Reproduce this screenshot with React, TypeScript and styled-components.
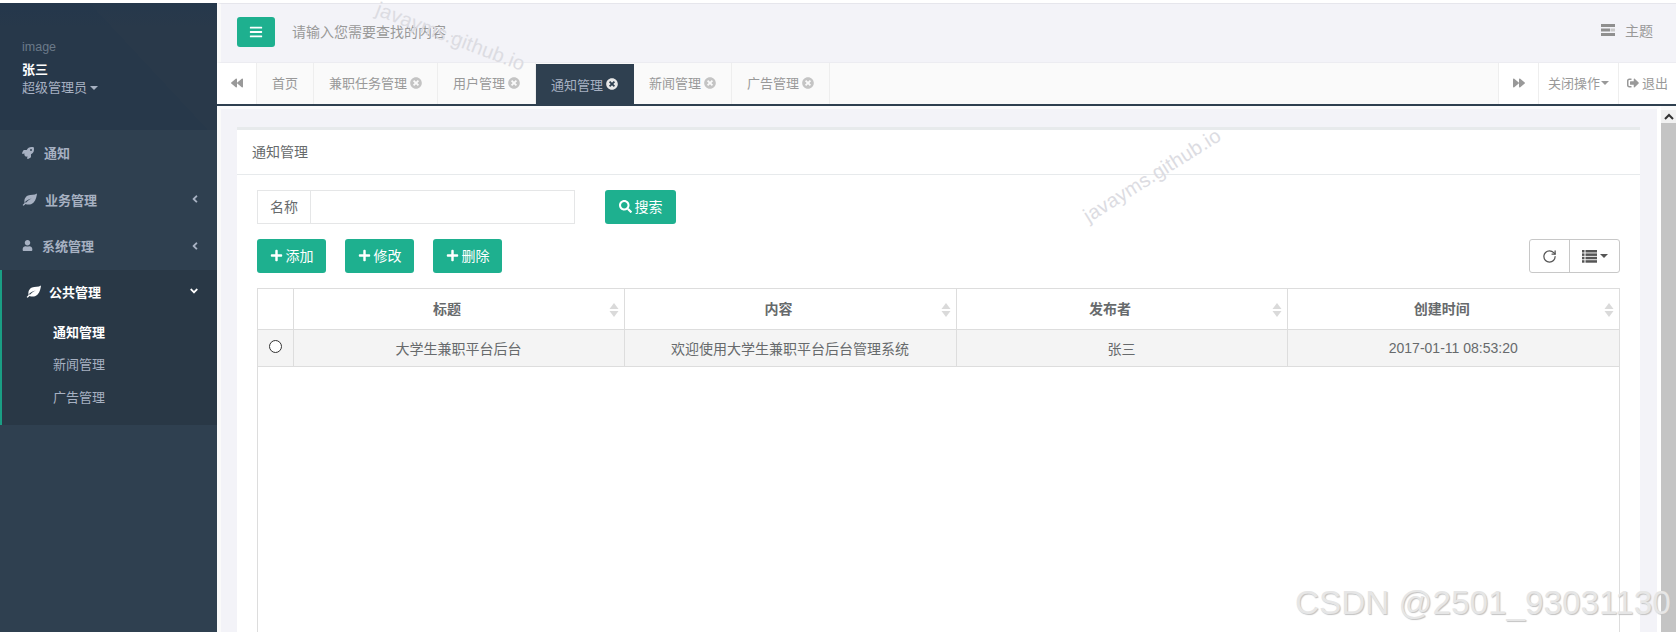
import React from "react";
import styled, { createGlobalStyle } from "styled-components";
import {
  FaBars, FaRocket, FaUser, FaAngleLeft, FaAngleDown, FaBackward, FaForward,
  FaTimesCircle, FaSearch, FaPlus, FaSignOutAlt,
} from "react-icons/fa";
import { RotateCw } from "lucide-react";

const GlobalStyle = createGlobalStyle`
  html, body { margin: 0; padding: 0; height: 100%; overflow: hidden; background: #fff; }
  body { font-family: "Liberation Sans", "Noto Sans CJK SC", sans-serif; font-size: 13px; color: #676a6c; }
  * { box-sizing: border-box; }
`;

const Page = styled.div`
  position: relative;
  display: flex;
  width: 100vw;
  height: 100vh;
  padding-top: 3px;
  overflow: hidden;
`;

const Sidebar = styled.aside`
  flex: 0 0 217px;
  display: flex;
  flex-direction: column;
  background: #2f4050;
  color: #a7b1c2;
`;

const Profile = styled.div`
  height: 127px;
  padding: 36px 0 0 22px;
  display: flex;
  flex-direction: column;
  background:
    linear-gradient(to bottom, rgba(28, 52, 80, 0.25), rgba(28, 52, 80, 0) 24px),
    linear-gradient(47deg, #27384a 0, #27384a 62%, #29394a 62%);
`;

const AvatarAlt = styled.span`
  font-size: 12.5px;
  line-height: 16px;
  color: #6b7a89;
`;

const UserName = styled.strong`
  margin-top: 6px;
  font-size: 13px;
  line-height: 18px;
  color: #fff;
`;

const UserRole = styled.span`
  font-size: 13px;
  line-height: 18px;
  color: #a7b1c2;
  display: flex;
  align-items: center;
`;

const Caret = styled.i<{ $gap?: number }>`
  display: inline-block;
  margin-left: ${(p) => p.$gap ?? 3}px;
  width: 0;
  height: 0;
  border-left: 4px solid transparent;
  border-right: 4px solid transparent;
  border-top: 4px solid currentColor;
`;

const NavItem = styled.div<{ $height: number; $gap: number }>`
  height: ${(p) => p.$height}px;
  padding: 0 16px 2px 22px;
  display: flex;
  align-items: center;
  gap: ${(p) => p.$gap}px;
  font-size: 13px;
  font-weight: 700;
  color: #a7b1c2;
  & > span { flex: 1; }
`;

const ActiveGroup = styled.div`
  height: 155px;
  background: #293846;
  border-left: 2px solid #1a9e84;
`;

const ActiveHeader = styled(NavItem)`
  padding: 0 17px 2px 24px;
  color: #fff;
`;

const SubList = styled.ul`
  margin: 2px 0 0;
  padding: 0;
  list-style: none;
`;

const SubItem = styled.li<{ $active?: boolean }>`
  height: 32.5px;
  padding: 0 0 2px 51px;
  display: flex;
  align-items: center;
  font-size: 13px;
  font-weight: ${(p) => (p.$active ? 700 : 400)};
  color: ${(p) => (p.$active ? "#fff" : "#a7b1c2")};
`;

const Main = styled.main`
  flex: 1;
  min-width: 0;
  display: flex;
  flex-direction: column;
`;

const TopBar = styled.header`
  height: 60px;
  padding: 13px 23px 0 16px;
  display: flex;
  align-items: flex-start;
  background: #f3f3f8;
  border-top: 1px solid #e6e6ec;
  border-left: 4px solid #fafafa;
  border-bottom: 1px solid #ececf1;
`;

const MenuButton = styled.button`
  width: 38px;
  height: 30px;
  padding: 0;
  border: 0;
  border-radius: 3px;
  background: #1eb08f;
  color: #fff;
  font-size: 14px;
  display: flex;
  align-items: center;
  justify-content: center;
`;

const SearchHint = styled.div`
  flex: 1;
  margin-left: 17px;
  font-size: 14px;
  line-height: 30px;
  color: #999;
`;

const FadedDots = styled.span`
  color: #d6d6dc;
`;

const ThemeLink = styled.div`
  display: flex;
  align-items: center;
  gap: 10px;
  height: 26px;
  font-size: 14px;
  color: #999;
`;

const TabBar = styled.nav`
  height: 43px;
  display: flex;
  background: #fafafa;
  border-bottom: 2px solid #2f4050;
`;

const TabArrow = styled.div<{ $width: number }>`
  flex: 0 0 ${(p) => p.$width}px;
  padding-bottom: 2px;
  display: flex;
  align-items: center;
  justify-content: center;
  gap: 3px;
  background: #fff;
  color: #999;
  font-size: 13px;
  border-left: 1px solid #eee;
  &:first-child { border-left: 0; border-right: 1px solid #eee; }
`;

const TabList = styled.div`
  flex: 1;
  display: flex;
`;

const Tab = styled.div<{ $active?: boolean }>`
  display: flex;
  align-items: center;
  gap: 3px;
  padding: 0 15px 2px;
  font-size: 13px;
  margin-top: ${(p) => (p.$active ? "1px" : "0")};
  margin-bottom: ${(p) => (p.$active ? "-2px" : "0")};
  color: ${(p) => (p.$active ? "#a7b1c2" : "#999")};
  background: ${(p) => (p.$active ? "#2f4050" : "transparent")};
  border-right: 1px solid ${(p) => (p.$active ? "#2f4050" : "#eee")};
  svg { color: ${(p) => (p.$active ? "#e8e8e8" : "#c4c4c4")}; font-size: 12px; }
`;

const Body = styled.div`
  flex: 1;
  min-height: 0;
  display: flex;
`;

const Content = styled.div`
  flex: 1;
  min-width: 0;
  display: flex;
  flex-direction: column;
  padding: 18px 17px 0 16px;
  background: #f3f3f8;
  border-left: 4px solid #fafafa;
  border-right: 4px solid #fff;
  border-top: 3px solid #fbfbfc;
`;

const Card = styled.section`
  flex: 1;
  min-height: 0;
  display: flex;
  flex-direction: column;
  background: #fff;
  border-top: 3px solid #e7eaec;
`;

const CardTitle = styled.h5`
  margin: 0;
  height: 45px;
  padding-left: 15px;
  font-size: 14px;
  font-weight: 400;
  line-height: 44px;
  color: #676a6c;
  border-bottom: 1px solid #e7eaec;
`;

const CardBody = styled.div`
  flex: 1;
  min-height: 0;
  display: flex;
  flex-direction: column;
  padding: 15px 20px 0;
`;

const FilterRow = styled.div`
  display: flex;
  gap: 30px;
  height: 34px;
  margin-bottom: 15px;
`;

const InputGroup = styled.div`
  width: 318px;
  display: flex;
  border: 1px solid #e5e6e7;
`;

const InputLabel = styled.span`
  flex: 0 0 53px;
  padding-bottom: 2px;
  display: flex;
  align-items: center;
  justify-content: center;
  font-size: 14px;
  color: #676a6c;
  border-right: 1px solid #e5e6e7;
`;

const TextInput = styled.input`
  flex: 1;
  min-width: 0;
  border: 0;
  outline: 0;
  background: #fff;
`;

const PrimaryButton = styled.button<{ $width?: number }>`
  width: ${(p) => p.$width || 69}px;
  height: 34px;
  padding: 0 0 2px;
  display: flex;
  align-items: center;
  justify-content: center;
  gap: 3px;
  border: 0;
  border-radius: 3px;
  background: #1eb08f;
  color: #fff;
  font: inherit;
  font-size: 14px;
`;

const Toolbar = styled.div`
  display: flex;
  align-items: flex-start;
  gap: 19px;
  height: 34px;
  margin-bottom: 15px;
`;

const ToolGroup = styled.div`
  margin-left: auto;
  width: 91px;
  height: 34px;
  display: flex;
  border: 1px solid #c8c8c8;
  border-radius: 3px;
  color: #555;
`;

const ToolButton = styled.div<{ $width: number }>`
  flex: 0 0 ${(p) => p.$width}px;
  display: flex;
  align-items: center;
  justify-content: center;
  gap: 3px;
  & + & { border-left: 1px solid #c8c8c8; }
`;

const TableFrame = styled.div`
  flex: 1;
  min-height: 0;
  border: 1px solid #ddd;
  border-bottom: 0;
`;

const DataTable = styled.table`
  width: 100%;
  table-layout: fixed;
  border-collapse: collapse;
  font-size: 14px;
  color: #676a6c;
`;

const HeadCell = styled.th`
  position: relative;
  height: 40px;
  padding: 0 23px 2px 0;
  font-weight: 700;
  text-align: center;
  border-right: 1px solid #ddd;
  border-bottom: 1px solid #ddd;
  &:last-child { border-right: 0; }
`;

const SortMark = styled.svg`
  position: absolute;
  right: 5px;
  top: 14px;
`;

const Row = styled.tr`
  background: #f4f4f4;
`;

const Cell = styled.td`
  height: 37px;
  padding: 0;
  text-align: center;
  font-weight: 400;
  border-right: 1px solid #ddd;
  border-bottom: 1px solid #ddd;
  &:last-child { border-right: 0; }
`;

const RadioInput = styled.input`
  display: block;
  appearance: none;
  margin: 0 0 2px 11px;
  width: 13px;
  height: 13px;
  border: 1.3px solid #333;
  border-radius: 50%;
  background: #fff;
`;

const ScrollTrack = styled.div`
  flex: 0 0 15px;
  display: flex;
  flex-direction: column;
  background: #f1f1f1;
  border-top: 4px solid #fafafa;
`;

const ScrollUp = styled.div`
  flex: 0 0 13px;
  display: flex;
  align-items: center;
  justify-content: center;
`;

const ScrollThumb = styled.div`
  flex: 1;
  background: #c4c4c4;
`;

const SoftMark = styled.span<{ $left: number; $top: number; $angle: number }>`
  position: absolute;
  left: ${(p) => p.$left}px;
  top: ${(p) => p.$top}px;
  font-size: 20px;
  line-height: 24px;
  letter-spacing: 0.2px;
  color: #dcdce2;
  white-space: nowrap;
  transform: rotate(${(p) => p.$angle}deg);
  transform-origin: left center;
  pointer-events: none;
`;

const CsdnMark = styled.span`
  position: absolute;
  left: 1295px;
  top: 586px;
  font-size: 33.3px;
  line-height: 33px;
  color: #e6e6e6;
  text-shadow: 1px 1px 1px #c2c2c2;
  white-space: nowrap;
  pointer-events: none;
`;

const SortIcon = () => (
  <SortMark width="10" height="14" viewBox="0 0 10 14" fill="#dadada">
    <path d="M5 0 9.5 6H.5z" />
    <path d="M5 14 .5 8h9z" />
  </SortMark>
);

const LeafIcon = () => (
  <svg width="15" height="13" viewBox="0 0 15 13" fill="currentColor">
    <path d="M15 .5c-.4 2.600-.8 6.600-3.600 9.200-2.400 2.200-5.600 2.300-7.900 1.200-.7.6-1.300 1.200-1.900 1.900l-1-.9c.7-.8 1.300-1.400 2-2C1.900 7.200 3 3.800 6 2.600 8.800 1.500 12.500 2.400 15 .5zM3.900 9.700c1.600-1.800 3.500-3.200 6-4.200-2.700.5-5 1.900-6.900 3.400z" fillRule="evenodd" />
  </svg>
);

const ThemeIcon = () => (
  <svg width="14" height="12" viewBox="0 0 14 12" fill="#8f8f8f">
    <rect x="0" y="0" width="14" height="3" />
    <rect x="0" y="4.500" width="9" height="3" />
    <rect x="9.500" y="4.500" width="4.500" height="3" fill="#c8c8c8" />
    <rect x="0" y="9" width="14" height="3" />
  </svg>
);

const ListIcon = () => (
  <svg width="15" height="13" viewBox="0 0 15 13" fill="#555">
    {[0, 3.4, 6.8, 10.2].map((y) => (
      <g key={y}>
        <rect x="0" y={y} width="2.500" height="2.500" />
        <rect x="3.500" y={y} width="11.500" height="2.500" />
      </g>
    ))}
  </svg>
);

const ScrollArrow = () => (
  <svg width="10" height="7" viewBox="0 0 10 7" fill="none" stroke="#333" strokeWidth="2">
    <path d="M1 6l4-4 4 4" />
  </svg>
);

const tabs = ["首页", "兼职任务管理", "用户管理", "通知管理", "新闻管理", "广告管理"];
const columns = ["标题", "内容", "发布者", "创建时间"];

export default function App() {
  return (
    <Page>
      <GlobalStyle />
      <Sidebar>
        <Profile>
          <AvatarAlt>image</AvatarAlt>
          <UserName>张三</UserName>
          <UserRole>超级管理员<Caret /></UserRole>
        </Profile>
        <NavItem $height={47} $gap={10}><FaRocket size={12} /><span>通知</span></NavItem>
        <NavItem $height={46} $gap={8}><LeafIcon /><span>业务管理</span><FaAngleLeft size={12} /></NavItem>
        <NavItem $height={47} $gap={9}><FaUser size={11} /><span>系统管理</span><FaAngleLeft size={12} /></NavItem>
        <ActiveGroup>
          <ActiveHeader $height={44} $gap={8}><LeafIcon /><span>公共管理</span><FaAngleDown size={12} /></ActiveHeader>
          <SubList>
            <SubItem $active>通知管理</SubItem>
            <SubItem>新闻管理</SubItem>
            <SubItem>广告管理</SubItem>
          </SubList>
        </ActiveGroup>
      </Sidebar>
      <Main>
        <TopBar>
          <MenuButton aria-label="菜单"><FaBars /></MenuButton>
          <SearchHint>请输入您需要查找的内容 <FadedDots>...</FadedDots></SearchHint>
          <ThemeLink><ThemeIcon />主题</ThemeLink>
        </TopBar>
        <TabBar>
          <TabArrow $width={40}><FaBackward size={12} /></TabArrow>
          <TabList>
            {tabs.map((t, i) => (
              <Tab key={t} $active={i === 3}>
                {t}
                {i > 0 && <FaTimesCircle />}
              </Tab>
            ))}
          </TabList>
          <TabArrow $width={40}><FaForward size={12} /></TabArrow>
          <TabArrow $width={80}>关闭操作<Caret $gap={-2} /></TabArrow>
          <TabArrow $width={58}><FaSignOutAlt size={12} />退出</TabArrow>
        </TabBar>
        <Body>
          <Content>
            <Card>
              <CardTitle>通知管理</CardTitle>
              <CardBody>
                <FilterRow>
                  <InputGroup>
                    <InputLabel>名称</InputLabel>
                    <TextInput />
                  </InputGroup>
                  <PrimaryButton $width={71}><FaSearch size={13} />搜索</PrimaryButton>
                </FilterRow>
                <Toolbar>
                  <PrimaryButton><FaPlus size={13} />添加</PrimaryButton>
                  <PrimaryButton><FaPlus size={13} />修改</PrimaryButton>
                  <PrimaryButton><FaPlus size={13} />删除</PrimaryButton>
                  <ToolGroup>
                    <ToolButton $width={39}><RotateCw size={15} strokeWidth={2} /></ToolButton>
                    <ToolButton $width={50}><ListIcon /><Caret $gap={0} /></ToolButton>
                  </ToolGroup>
                </Toolbar>
                <TableFrame>
                  <DataTable>
                    <colgroup>
                      <col style={{ width: 35 }} />
                      <col style={{ width: 331 }} />
                      <col style={{ width: 332 }} />
                      <col style={{ width: 331 }} />
                      <col />
                    </colgroup>
                    <thead>
                      <tr>
                        <HeadCell />
                        {columns.map((c) => (
                          <HeadCell key={c}>{c}<SortIcon /></HeadCell>
                        ))}
                      </tr>
                    </thead>
                    <tbody>
                      <Row>
                        <Cell><RadioInput type="radio" name="row" /></Cell>
                        <Cell>大学生兼职平台后台</Cell>
                        <Cell>欢迎使用大学生兼职平台后台管理系统</Cell>
                        <Cell>张三</Cell>
                        <Cell>2017-01-11 08:53:20</Cell>
                      </Row>
                    </tbody>
                  </DataTable>
                </TableFrame>
              </CardBody>
            </Card>
          </Content>
          <ScrollTrack>
            <ScrollUp><ScrollArrow /></ScrollUp>
            <ScrollThumb />
          </ScrollTrack>
        </Body>
      </Main>
      <SoftMark $left={377} $top={-4} $angle={21}>javayms.github.io</SoftMark>
      <SoftMark $left={1085} $top={205} $angle={-32}>javayms.github.io</SoftMark>
      <CsdnMark>CSDN @2501_93031130</CsdnMark>
    </Page>
  );
}
